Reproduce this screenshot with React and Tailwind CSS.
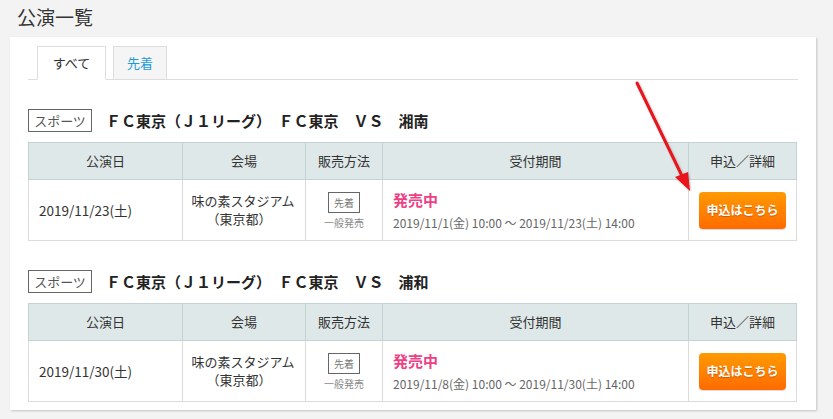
import React from "react";

const F = { fontFamily: '"Noto Sans CJK JP", "Noto Sans", sans-serif' };

function Section({ title, date, period }) {
  return (
    <div>
      <div className="flex items-center h-[23px]">
        <div className="w-[64px] h-[23px] border border-[#666] flex items-center justify-center text-[13px] text-[#555] leading-none">
          スポーツ
        </div>
        <div className="ml-[14px] text-[15px] font-bold text-[#222] leading-none whitespace-pre">
          {title}
        </div>
      </div>
      <table className="mt-[10px] w-[768px] border-collapse table-fixed">
        <colgroup>
          <col className="w-[154px]" />
          <col className="w-[123px]" />
          <col className="w-[77px]" />
          <col className="w-[306px]" />
          <col className="w-[108px]" />
        </colgroup>
        <thead>
          <tr className="h-[37px] bg-[#dfe8e8] text-[13px] text-[#333]">
            {["公演日", "会場", "販売方法", "受付期間", "申込／詳細"].map((h) => (
              <th key={h} className="border border-[#c3d3d3] font-normal text-center p-0">
                {h}
              </th>
            ))}
          </tr>
        </thead>
        <tbody>
          <tr className="h-[61px] text-[13px] text-[#333]">
            <td className="border border-[#dcdcdc] pl-[10px] text-[13.5px]">{date}</td>
            <td className="border border-[#dcdcdc] text-center leading-[18px] pr-[2px]">
              <div>味の素スタジアム</div>
              <div className="pr-[8px]">（東京都）</div>
            </td>
            <td className="border border-[#dcdcdc] text-center">
              <div className="flex flex-col items-center">
                <div className="w-[32px] h-[21px] border border-[#666] text-[10px] text-[#777] flex items-center justify-center leading-none">
                  先着
                </div>
                <div className="mt-[5px] text-[10px] text-[#888] leading-none">一般発売</div>
              </div>
            </td>
            <td className="border border-[#dcdcdc] pl-[10px]">
              <div className="text-[15px] font-bold text-[#ee4083] leading-none">発売中</div>
              <div className="mt-[10px] text-[12px] text-[#666] leading-none">{period}</div>
            </td>
            <td className="border border-[#dcdcdc] text-center">
              <div className="mx-auto w-[87px] h-[37px] rounded-[4px] bg-gradient-to-b from-[#ff9a00] to-[#ff6a00] flex items-center justify-center text-white text-[12px] font-bold [text-shadow:0_1px_1px_rgba(120,40,0,0.4)] shadow-[0_1px_1px_rgba(0,0,0,0.15)]">
                申込はこちら
              </div>
            </td>
          </tr>
        </tbody>
      </table>
    </div>
  );
}

export default function App() {
  return (
    <div className="relative w-[833px] h-[419px] bg-[#f3f3f3] overflow-hidden" style={F}>
      <div className="pl-[17px] pt-[5px] h-[37px] text-[19px] text-[#333] leading-[24px]">公演一覧</div>
      <div className="ml-[10px] w-[806px] h-[373px] bg-white shadow-[1px_1px_2px_rgba(0,0,0,0.2)] pt-[9px] px-[18px]">
        <div className="flex border-b border-[#dddddd] pl-[9px] h-[34px]">
          <div className="w-[69px] h-[34px] border border-[#dddddd] border-b-white bg-white flex items-center justify-center text-[13px] text-[#333] mb-[-1px]">
            すべて
          </div>
          <div className="ml-[7px] w-[54px] h-[33px] border border-[#dddddd] border-b-0 bg-[#f5f5f5] flex items-center justify-center text-[13px] text-[#1d9bd7]">
            先着
          </div>
        </div>
        <div className="mt-[29px]">
          <Section
            title={"ＦＣ東京（Ｊ１リーグ）　ＦＣ東京　ＶＳ　湘南"}
            date="2019/11/23(土)"
            period="2019/11/1(金) 10:00 ～ 2019/11/23(土) 14:00"
          />
        </div>
        <div className="mt-[29px]">
          <Section
            title={"ＦＣ東京（Ｊ１リーグ）　ＦＣ東京　ＶＳ　浦和"}
            date="2019/11/30(土)"
            period="2019/11/8(金) 10:00 ～ 2019/11/30(土) 14:00"
          />
        </div>
      </div>
      <svg className="absolute left-0 top-0 pointer-events-none" width="833" height="419">
        <defs>
          <filter id="sh" x="-20%" y="-20%" width="140%" height="140%">
            <feDropShadow dx="1" dy="1" stdDeviation="1" floodColor="#000" floodOpacity="0.25" />
          </filter>
        </defs>
        <g filter="url(#sh)">
          <line x1="637" y1="83" x2="683" y2="178" stroke="#e8141a" strokeWidth="3" strokeLinecap="round" />
          <polygon points="690,191 675,177 688,172" fill="#e8141a" />
        </g>
      </svg>
    </div>
  );
}
